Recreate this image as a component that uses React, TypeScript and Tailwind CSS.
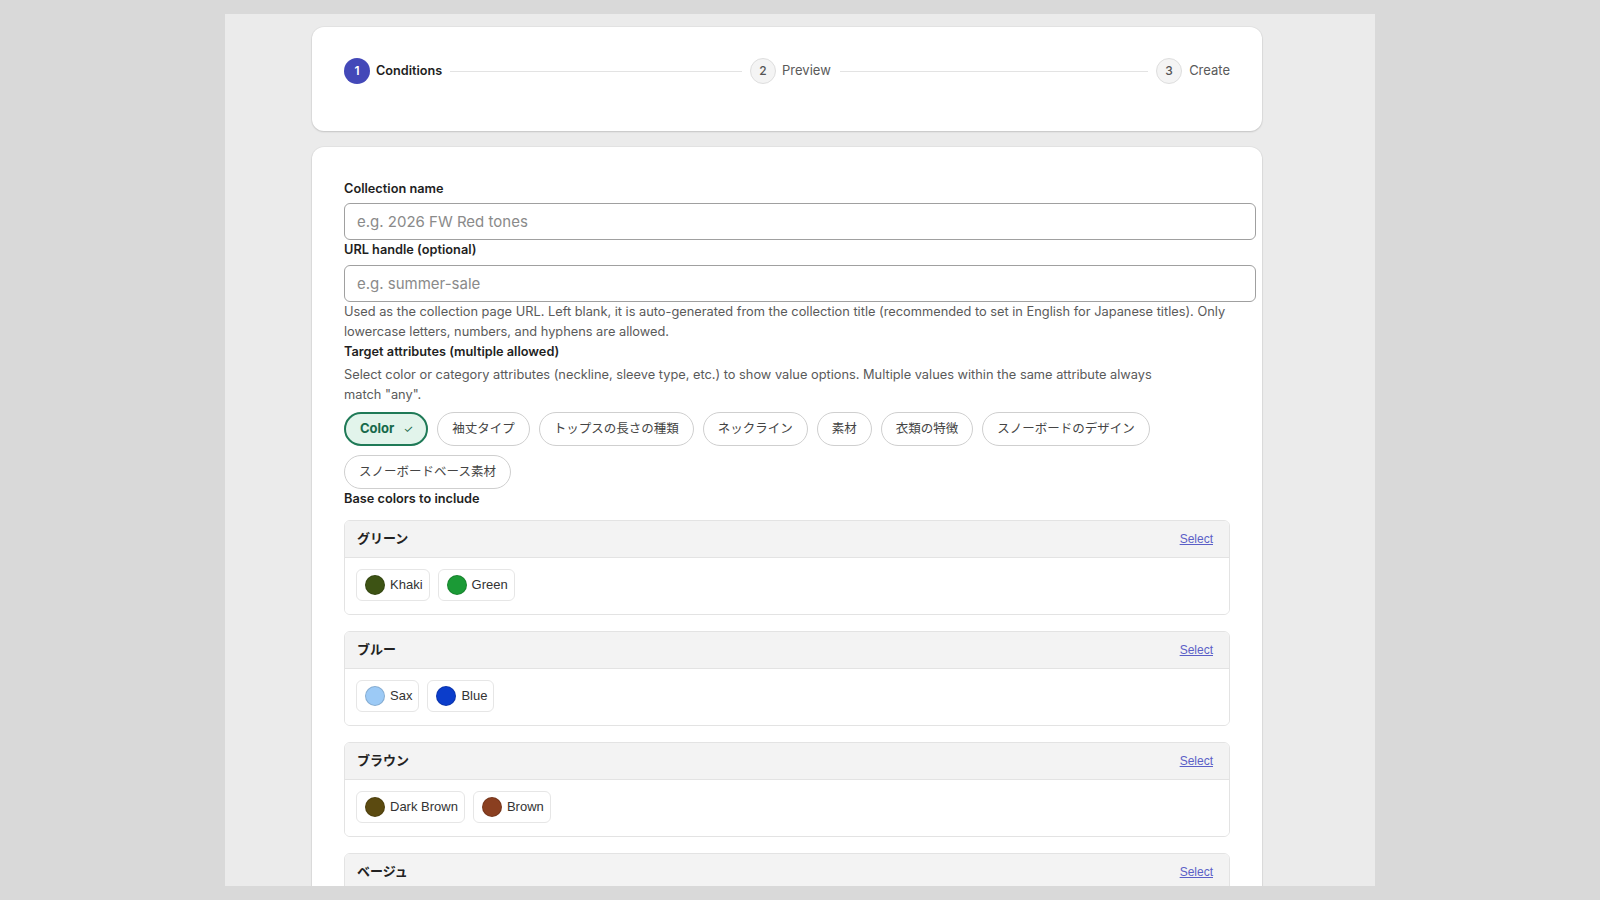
import React from "react";

const attrs = [
  "袖丈タイプ",
  "トップスの長さの種類",
  "ネックライン",
  "素材",
  "衣類の特徴",
  "スノーボードのデザイン",
  "スノーボードベース素材",
];

const groups: { name: string; colors: { label: string; hex: string }[] }[] = [
  { name: "グリーン", colors: [ { label: "Khaki", hex: "#3d5314" }, { label: "Green", hex: "#1b9a36" } ] },
  { name: "ブルー", colors: [ { label: "Sax", hex: "#9ccaf6" }, { label: "Blue", hex: "#0b3dcb" } ] },
  { name: "ブラウン", colors: [ { label: "Dark Brown", hex: "#5b4a10" }, { label: "Brown", hex: "#8a3f20" } ] },
  { name: "ベージュ", colors: [ { label: "Beige", hex: "#d9c6a0" }, { label: "Ivory", hex: "#f3ecd8" } ] },
];

function Circle({ n, active }: { n: number; active?: boolean }) {
  return active ? (
    <div className="w-[26px] h-[26px] shrink-0 rounded-full bg-[#4348b8] text-white text-[12px] font-semibold flex items-center justify-center">
      {n}
    </div>
  ) : (
    <div className="w-[26px] h-[26px] shrink-0 rounded-full bg-[#f4f4f4] border border-[#dedede] text-[#555] text-[12px] font-medium flex items-center justify-center">
      {n}
    </div>
  );
}

export default function App() {
  return (
    <div className="w-[1600px] h-[900px] bg-[#d9d9d9] pt-[14px] overflow-hidden font-['Inter','Noto_Sans_CJK_JP',sans-serif]">
      <div className="mx-auto w-[1150px] h-[872px] bg-[#ebebeb] overflow-hidden pl-[87px] pt-[13px]">
        <div className="w-[950px] flex flex-col gap-4">
          {/* Stepper */}
          <div className="bg-white rounded-xl shadow-[0_0_0_1px_rgba(0,0,0,0.03),0_1px_2px_rgba(0,0,0,0.14)] h-[104px] pl-[32px] pr-[32px] pt-[31px]">
            <div className="flex items-center">
              <div className="flex-1 flex items-center">
                <Circle n={1} active />
                <span className="ml-[6px] text-[12.7px] font-semibold text-[#1f1f1f]">Conditions</span>
                <div className="flex-1 h-px bg-[#e3e3e3] ml-[8px] mr-2" />
              </div>
              <div className="flex-1 flex items-center">
                <Circle n={2} />
                <span className="ml-[6px] text-[13px] text-[#5a5a5a]">Preview</span>
                <div className="flex-1 h-px bg-[#e3e3e3] ml-[9px] mr-2" />
              </div>
              <div className="flex items-center shrink-0">
                <Circle n={3} />
                <span className="ml-[7px] text-[13px] text-[#5a5a5a]">Create</span>
              </div>
            </div>
          </div>

          {/* Form */}
          <div className="bg-white rounded-xl shadow-[0_0_0_1px_rgba(0,0,0,0.03),0_1px_2px_rgba(0,0,0,0.14)] px-[32px] pt-[32px] pb-8">
            <label className="block text-[12.75px] leading-5 font-semibold text-[#1f1f1f]">Collection name</label>
            <input
              className="mt-[4px] box-content w-full h-[35px] px-3 py-0 border border-[#a0a0a0] rounded-md text-[15px] text-[#222] outline-none placeholder:text-[#8a8a8a]"
              placeholder="e.g. 2026 FW Red tones"
            />
            <label className="block text-[12.75px] leading-5 font-semibold text-[#1f1f1f]">URL handle (optional)</label>
            <input
              className="mt-[5px] box-content w-full h-[35px] px-3 py-0 border border-[#a0a0a0] rounded-md text-[15px] text-[#222] outline-none placeholder:text-[#8a8a8a]"
              placeholder="e.g. summer-sale"
            />
            <p className="text-[12.8px] leading-[19.5px] text-[#5a5a5a]">
              Used as the collection page URL. Left blank, it is auto-generated from the collection title (recommended to set in English for Japanese titles). Only lowercase letters, numbers, and hyphens are allowed.
            </p>
            <label className="block mt-px text-[12.75px] leading-5 font-semibold text-[#1f1f1f]">Target attributes (multiple allowed)</label>
            <p className="mt-[3px] max-w-[830px] text-[12.8px] leading-[19.5px] text-[#5a5a5a]">
              Select color or category attributes (neckline, sleeve type, etc.) to show value options. Multiple values within the same attribute always match "any".
            </p>
            <div className="mt-2 flex flex-wrap gap-x-[9px] gap-y-[9px]">
              <button className="h-[34px] pl-[14px] pr-[13px] rounded-full border-2 border-[#1f7a57] bg-[#e2f4eb] text-[#17694a] text-[13px] font-bold flex items-center gap-[9px]">
                <span>Color</span>
                <span className="text-[11px] font-normal">✓</span>
              </button>
              {attrs.map((a) => (
                <button
                  key={a}
                  className="h-[34px] px-[14px] rounded-full border border-[#cfcfcf] bg-white text-[#444] text-[12.5px] flex items-center"
                >
                  {a}
                </button>
              ))}
            </div>
            <label className="block text-[12.75px] leading-5 font-semibold text-[#1f1f1f]">Base colors to include</label>
            <div className="mt-[11px] flex flex-col gap-4 font-['Liberation_Sans','Noto_Sans_CJK_JP',sans-serif]">
              {groups.map((g) => (
                <div key={g.name} className="border border-[#e3e3e3] rounded-md overflow-hidden">
                  <div className="h-[37px] bg-[#f3f3f3] border-b border-[#e3e3e3] flex items-center justify-between pl-3 pr-4">
                    <span className="text-[13px] font-bold text-[#222]">{g.name}</span>
                    <a className="text-[12px] underline text-[#5b5fc7] cursor-pointer">Select</a>
                  </div>
                  <div className="pl-[11px] pr-3 pt-[11px] pb-[13px] flex gap-2 bg-white">
                    {g.colors.map((c) => (
                      <div
                        key={c.label}
                        className="h-[32px] pl-2 pr-[6px] border border-[#e6e6e6] rounded-md flex items-center gap-[5px] text-[13px] text-[#333]"
                      >
                        <span
                          className="w-5 h-5 rounded-full border border-[rgba(0,0,0,0.15)]"
                          style={{ backgroundColor: c.hex }}
                        />
                        <span>{c.label}</span>
                      </div>
                    ))}
                  </div>
                </div>
              ))}
            </div>
          </div>
        </div>
      </div>
    </div>
  );
}
